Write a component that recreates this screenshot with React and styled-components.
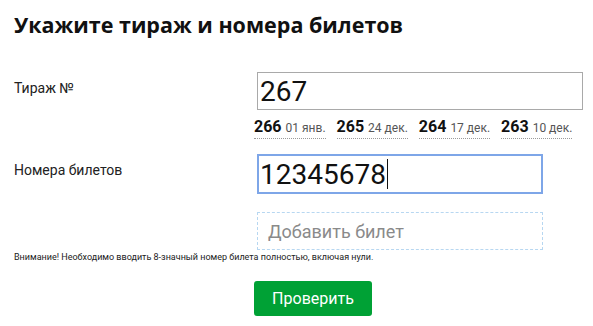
import React from 'react';
import styled, { createGlobalStyle } from 'styled-components';

const GlobalStyle = createGlobalStyle`
    body {
        margin: 0;
        background: #ffffff;
        font-family: Roboto, "Liberation Sans", sans-serif;
        color: #111111;
    }
`;

const draws = [
    { num: '266', date: '01 янв.' },
    { num: '265', date: '24 дек.' },
    { num: '264', date: '17 дек.' },
    { num: '263', date: '10 дек.' }
];

function App() {
    return (
        <Page>
            <GlobalStyle />
            <Title>Укажите тираж и номера билетов</Title>
            <Form>
                <Label>Тираж №</Label>
                <div>
                    <Field $width={326}>267</Field>
                    <Draws>
                        {draws.map((d) => (
                            <Draw key={d.num}>
                                <DrawNum>{d.num}</DrawNum>
                                <DrawDate>{d.date}</DrawDate>
                            </Draw>
                        ))}
                    </Draws>
                </div>

                <Label $top={15}>Номера билетов</Label>
                <div>
                    <Field $width={286} $focused>
                        12345678
                        <Caret />
                    </Field>
                    <AddTicket>Добавить билет</AddTicket>
                </div>

                <Warning>Внимание! Необходимо вводить 8-значный номер билета полностью, включая нули.</Warning>

                <ButtonCell>
                    <CheckButton>Проверить</CheckButton>
                </ButtonCell>
            </Form>
        </Page>
    );
}

const Page = styled.div`
    width: 593px;
    height: 326px;
    padding: 11px 0 0 14px;
    box-sizing: border-box;
    overflow: hidden;
`;

const Title = styled.h1`
    margin: 0;
    font-family: "Open Sans", "Liberation Sans", sans-serif;
    font-weight: 700;
    font-size: 21.5px;
    line-height: 28px;
    color: #111111;
`;

const Form = styled.div`
    margin-top: 33px;
    display: grid;
    grid-template-columns: 242px 1fr;
    align-items: start;
`;

const Label = styled.div`
    font-size: 14px;
    line-height: 16px;
    padding-top: 8px;
    margin-top: ${(p) => p.$top || 0}px;
    color: #222222;
`;

const Field = styled.div`
    width: ${(p) => p.$width}px;
    height: ${(p) => (p.$focused ? 40 : 38)}px;
    margin-top: ${(p) => (p.$focused ? 15 : 0)}px;
    margin-left: 1px;
    box-sizing: border-box;
    border: ${(p) => (p.$focused ? '2px solid #7ea6e8' : '1px solid #a9a9a9')};
    padding-left: ${(p) => (p.$focused ? 1 : 2)}px;
    display: flex;
    align-items: center;
    font-size: 28px;
    color: #111111;
`;

const Caret = styled.span`
    display: inline-block;
    width: 1px;
    height: 30px;
    background: #111111;
    margin-left: 1px;
`;

const Draws = styled.div`
    display: flex;
    gap: 11px;
    margin-top: 8px;
    margin-left: -2px;
`;

const Draw = styled.div`
    display: flex;
    align-items: baseline;
    gap: 4px;
    padding-bottom: 1px;
    border-bottom: 1px dotted #9a9a9a;
    line-height: 18px;
`;

const DrawNum = styled.span`
    font-size: 16px;
    font-weight: 700;
    color: #111111;
`;

const DrawDate = styled.span`
    font-size: 12px;
    color: #555555;
`;

const AddTicket = styled.div`
    width: 286px;
    height: 38px;
    margin-top: 18px;
    margin-left: 1px;
    box-sizing: border-box;
    border: 1px dashed #b7d7f1;
    padding-left: 10px;
    display: flex;
    align-items: center;
    font-size: 18px;
    color: #8a8a8a;
`;

const Warning = styled.div`
    grid-column: 1 / 3;
    margin-top: 2px;
    font-size: 9px;
    line-height: 11px;
    color: #222222;
`;

const ButtonCell = styled.div`
    grid-column: 2;
    margin-top: 18px;
    margin-left: -2px;
`;

const CheckButton = styled.button`
    width: 118px;
    height: 35px;
    border: none;
    border-radius: 3px;
    background: #00a135;
    color: #ffffff;
    font-family: Roboto, "Liberation Sans", sans-serif;
    font-size: 16px;
    padding: 0;
    cursor: pointer;
`;

export default App;
